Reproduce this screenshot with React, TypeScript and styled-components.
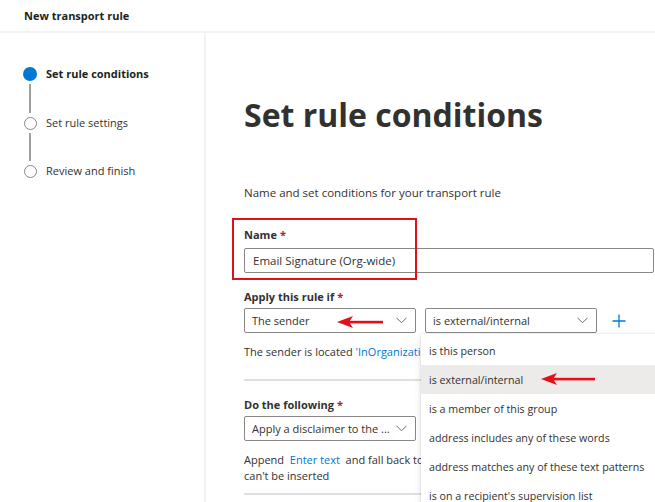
import React from "react";
import styled, { createGlobalStyle } from "styled-components";

const Global = createGlobalStyle`
  html, body { margin: 0; padding: 0; background: #fff; }
  body { font-family: "Segoe UI", "Open Sans", "Noto Sans", sans-serif; color: #323130; }
  * { box-sizing: border-box; }
`;

const Page = styled.div`
  width: 655px;
  height: 502px;
  overflow: hidden;
  display: flex;
  flex-direction: column;
  position: relative;
`;

const Header = styled.div`
  height: 33px;
  flex: none;
  border-bottom: 2px solid #f3f2f1;
  padding-left: 24px;
  display: flex;
  align-items: center;
  font-size: 11px;
  font-weight: 700;
  color: #201f1e;
`;

const Body = styled.div`
  flex: 1;
  display: flex;
  min-height: 0;
`;

const Sidebar = styled.div`
  width: 206px;
  flex: none;
  border-right: 2px solid #f3f2f1;
  padding: 34px 0 0 23px;
`;

const Step = styled.div`
  display: flex;
  align-items: flex-start;
`;

const Indicator = styled.div`
  width: 14px;
  display: flex;
  flex-direction: column;
  align-items: center;
  flex: none;
`;

const Dot = styled.div<{ $active?: boolean }>`
  width: ${(p) => (p.$active ? 14 : 13)}px;
  height: ${(p) => (p.$active ? 14 : 13)}px;
  border-radius: 50%;
  background: ${(p) => (p.$active ? "#0078d4" : "#fff")};
  border: ${(p) => (p.$active ? "none" : "1.5px solid #8a8886")};
  margin-top: ${(p) => (p.$active ? 0 : 1)}px;
`;

const Connector = styled.div`
  width: 1.5px;
  height: 28.5px;
  background: #a19f9d;
  margin: 3px 0 3px;
`;

const StepLabel = styled.div<{ $active?: boolean }>`
  margin-left: 9px;
  font-size: 11px;
  line-height: 14px;
  font-weight: ${(p) => (p.$active ? 700 : 400)};
  color: ${(p) => (p.$active ? "#201f1e" : "#323130")};
`;

const Main = styled.div`
  flex: 1;
  padding-left: 38px;
  position: relative;
`;

const Form = styled.div`
  width: 410px;
  position: relative;
  padding-top: 60px;
`;

const Title = styled.h1`
  margin: 0;
  font-size: 32px;
  line-height: 44px;
  font-weight: 700;
  color: #323130;
  letter-spacing: 0;
`;

const Description = styled.p`
  margin: 48px 0 0;
  font-size: 11.5px;
  line-height: 16px;
  color: #323130;
`;

const Label = styled.div<{ $top: number }>`
  margin-top: ${(p) => p.$top}px;
  font-size: 11px;
  line-height: 16px;
  font-weight: 700;
  color: #323130;
`;

const Req = styled.span`
  color: #a4262c;
  margin-left: 3px;
`;

const TextInput = styled.div`
  margin-top: 5px;
  height: 25px;
  border: 1px solid #8a8886;
  border-radius: 2px;
  padding-left: 8px;
  display: flex;
  align-items: center;
  font-size: 11.5px;
  color: #323130;
`;

const SelectRow = styled.div`
  display: flex;
  align-items: center;
  margin-top: 3px;
  gap: 9px;
`;

const Select = styled.div`
  width: 172px;
  height: 25px;
  border: 1px solid #8a8886;
  border-radius: 2px;
  padding: 0 8px 0 7px;
  display: flex;
  align-items: center;
  justify-content: space-between;
  font-size: 11px;
  color: #323130;
  position: relative;
  flex: none;
`;

const SelectText = styled.span`
  white-space: nowrap;
`;

const PlusIcon = styled.svg`
  margin-left: 6px;
  flex: none;
`;

const Info = styled.div<{ $top: number }>`
  margin-top: ${(p) => p.$top}px;
  font-size: 11px;
  line-height: 16px;
  color: #323130;
  white-space: nowrap;
`;

const Link = styled.span`
  color: #0078d4;
`;

const Divider = styled.div<{ $top: number }>`
  margin-top: ${(p) => p.$top}px;
  height: 2px;
  background: #e1dfdd;
  width: 180px;
`;

const Annotation = styled.div`
  position: absolute;
  left: -12px;
  top: 185px;
  width: 185px;
  height: 62px;
  border: 2.5px solid #e3101a;
  pointer-events: none;
`;

const Arrow = styled.svg<{ $left: number; $top: number }>`
  position: absolute;
  left: ${(p) => p.$left}px;
  top: ${(p) => p.$top}px;
`;

const Menu = styled.div`
  position: absolute;
  left: 421px;
  top: 334px;
  width: 260px;
  background: #fff;
  box-shadow: 0 3px 7px rgba(0, 0, 0, 0.13), 0 0 2px rgba(0, 0, 0, 0.11);
  padding-top: 2px;
`;

const MenuItem = styled.div<{ $selected?: boolean }>`
  height: 29px;
  padding-left: 8px;
  display: flex;
  align-items: center;
  font-size: 10.7px;
  color: #323130;
  background: ${(p) => (p.$selected ? "#edebe9" : "transparent")};
  white-space: nowrap;
`;

const Chevron = () => (
  <svg width="11" height="7" viewBox="0 0 11 7">
    <path d="M0.5 0.8 L5.5 5.8 L10.5 0.8" fill="none" stroke="#605e5c" strokeWidth="0.9" />
  </svg>
);

const RedArrow = ({ left, top, width }: { left: number; top: number; width: number }) => (
  <Arrow $left={left} $top={top} width={width} height="14" viewBox={`0 0 ${width} 14`}>
    <polygon points={`0,7 16,1 12,7 16,13`} fill="#e3101a" />
    <rect x="12" y="5.8" width={width - 12} height="2.6" fill="#e3101a" />
  </Arrow>
);

const menuItems = [
  "is this person",
  "is external/internal",
  "is a member of this group",
  "address includes any of these words",
  "address matches any of these text patterns",
  "is on a recipient's supervision list",
];

export default function App() {
  return (
    <>
      <Global />
      <Page>
        <Header>New transport rule</Header>
        <Body>
          <Sidebar>
            <Step>
              <Indicator>
                <Dot $active />
                <Connector />
              </Indicator>
              <StepLabel $active>Set rule conditions</StepLabel>
            </Step>
            <Step>
              <Indicator>
                <Dot />
                <Connector />
              </Indicator>
              <StepLabel>Set rule settings</StepLabel>
            </Step>
            <Step>
              <Indicator>
                <Dot />
              </Indicator>
              <StepLabel>Review and finish</StepLabel>
            </Step>
          </Sidebar>
          <Main>
            <Form>
              <Title>Set rule conditions</Title>
              <Description>Name and set conditions for your transport rule</Description>
              <Label $top={26}>
                Name<Req>*</Req>
              </Label>
              <TextInput>Email Signature (Org-wide)</TextInput>
              <Label $top={16}>
                Apply this rule if<Req>*</Req>
              </Label>
              <SelectRow>
                <Select>
                  <SelectText>The sender</SelectText>
                  <Chevron />
                </Select>
                <Select>
                  <SelectText>is external/internal</SelectText>
                  <Chevron />
                </Select>
                <PlusIcon width="14" height="14" viewBox="0 0 14 14">
                  <path d="M7 0.5 V13.5 M0.5 7 H13.5" stroke="#0078d4" strokeWidth="1.3" fill="none" />
                </PlusIcon>
              </SelectRow>
              <Info $top={11}>
                The sender is located <Link>'InOrganization'</Link>
              </Info>
              <Divider $top={19} />
              <Label $top={16}>
                Do the following<Req>*</Req>
              </Label>
              <SelectRow>
                <Select>
                  <SelectText>Apply a disclaimer to the ...</SelectText>
                  <Chevron />
                </Select>
              </SelectRow>
              <Info $top={11}>
                Append&nbsp; <Link>Enter text</Link>&nbsp; and fall back to action if the disclaimer
              </Info>
              <Info $top={0}>can't be inserted</Info>
              <Divider $top={9} />
              <Annotation />
            </Form>
          </Main>
        </Body>
        <RedArrow left={337} top={315} width={46} />
        <Menu>
          {menuItems.map((m, i) => (
            <MenuItem key={m} $selected={i === 1}>
              {m}
            </MenuItem>
          ))}
        </Menu>
        <RedArrow left={541} top={372} width={54} />
      </Page>
    </>
  );
}
